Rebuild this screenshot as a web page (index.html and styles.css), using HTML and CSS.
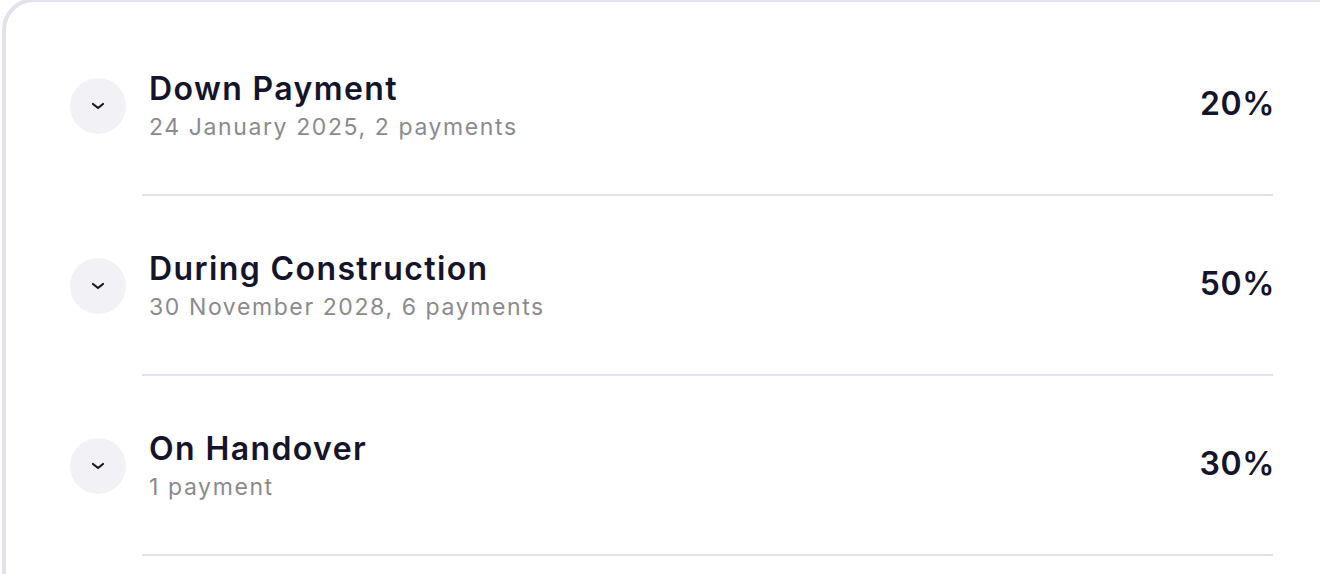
FILE: index.html
```html
<!DOCTYPE html>
<html lang="en">
<head>
<meta charset="utf-8">
<title>Payment plan</title>
<link rel="stylesheet" href="styles.css">
</head>
<body>
<div class="card">
  <div class="row">
    <div class="toggle"><svg width="14" height="8" viewBox="0 0 14 8"><path d="M2 2 L7 6 L12 2" fill="none" stroke="#14142b" stroke-width="2.2" stroke-linecap="round" stroke-linejoin="round"/></svg></div>
    <div class="content">
      <div class="info">
        <div class="title">Down Payment</div>
        <div class="sub">24 January 2025, 2 payments</div>
      </div>
      <div class="pct">20%</div>
    </div>
  </div>
  <div class="row">
    <div class="toggle"><svg width="14" height="8" viewBox="0 0 14 8"><path d="M2 2 L7 6 L12 2" fill="none" stroke="#14142b" stroke-width="2.2" stroke-linecap="round" stroke-linejoin="round"/></svg></div>
    <div class="content">
      <div class="info">
        <div class="title">During Construction</div>
        <div class="sub">30 November 2028, 6 payments</div>
      </div>
      <div class="pct">50%</div>
    </div>
  </div>
  <div class="row">
    <div class="toggle"><svg width="14" height="8" viewBox="0 0 14 8"><path d="M2 2 L7 6 L12 2" fill="none" stroke="#14142b" stroke-width="2.2" stroke-linecap="round" stroke-linejoin="round"/></svg></div>
    <div class="content">
      <div class="info">
        <div class="title">On Handover</div>
        <div class="sub">1 payment</div>
      </div>
      <div class="pct">30%</div>
    </div>
  </div>
</div>
</body>
</html>
```

FILE: styles.css
```css
html, body {
  margin: 0;
  padding: 0;
  background: #ffffff;
  overflow: hidden;
}
body {
  font-family: "Inter", "Liberation Sans", sans-serif;
  color: #14142b;
}
.card {
  box-sizing: border-box;
  width: 1360px;
  height: 620px;
  margin: -2px 0 0 2px;
  border: 4px solid #e1e1ec;
  border-radius: 32px;
  padding: 14px 85px 0 64px;
}
.row {
  display: flex;
  align-items: center;
}
.toggle {
  flex-shrink: 0;
  width: 56px;
  height: 56px;
  border-radius: 50%;
  background: #f2f2f6;
  margin-right: 16px;
  display: flex;
  align-items: center;
  justify-content: center;
}
.toggle svg {
  display: block;
}
.content {
  flex: 1;
  height: 178px;
  border-bottom: 2px solid #e1e1ec;
  display: flex;
  align-items: center;
  justify-content: space-between;
  padding-left: 7px;
}
.title {
  font-size: 32px;
  font-weight: 600;
  line-height: 40px;
  letter-spacing: 1.4px;
  color: #14142b;
}
.sub {
  font-size: 23px;
  line-height: 30px;
  letter-spacing: 1.6px;
  color: #8a8a8e;
  margin-top: 3px;
}
.pct {
  font-size: 32px;
  font-weight: 600;
  letter-spacing: 0.6px;
  color: #14142b;
  margin-top: -4px;
  margin-right: -2px;
}
```
